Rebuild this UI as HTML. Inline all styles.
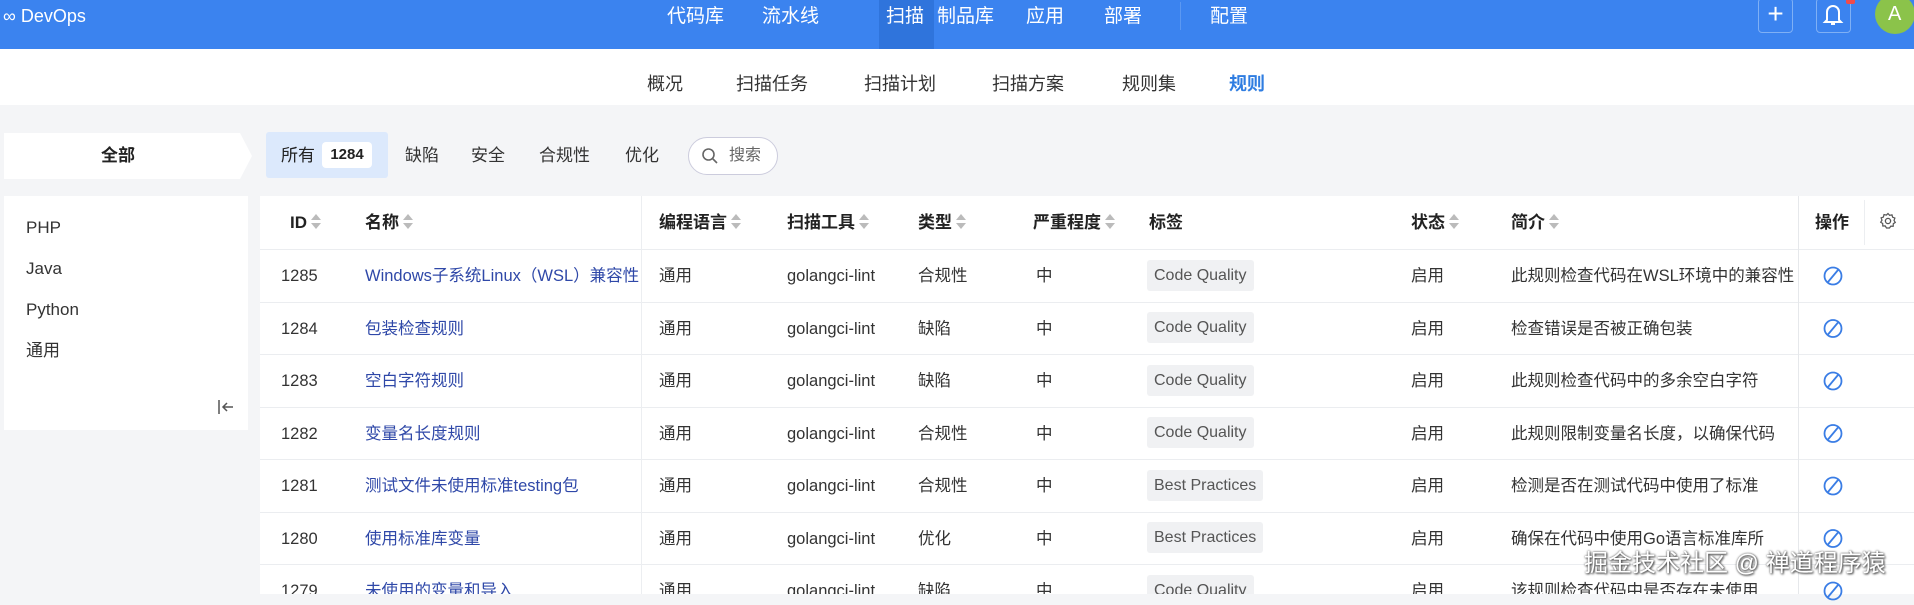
<!DOCTYPE html>
<html><head><meta charset="utf-8"><style>
*{margin:0;padding:0;box-sizing:border-box}
body{width:1914px;height:594px;overflow:hidden;background:#f4f5f7;font-family:"Liberation Sans","Noto Sans CJK SC",sans-serif;color:#333;position:relative}
.a{position:absolute;white-space:nowrap;line-height:22px}
.top{position:absolute;left:0;top:0;width:1914px;height:49px;background:#3b83ef}
.nav{color:#fff;font-size:19px;top:6px}
.sub{font-size:18px;top:73px;color:#333}
.th{font-size:17px;font-weight:bold;color:#222;top:212px}
.sort{display:inline-block;vertical-align:middle;margin-left:4px;width:10px;height:16px;position:relative;top:-2px}
.sort:before{content:"";position:absolute;left:0;top:0;border:5px solid transparent;border-bottom:6px solid #bbb;border-top:0}
.sort:after{content:"";position:absolute;left:0;top:9px;border:5px solid transparent;border-top:6px solid #bbb;border-bottom:0}
.td{font-size:16.5px;color:#333}
.nm{color:#2f48a8}
.tag{position:absolute;background:#f0f1f3;border-radius:3px;height:31px;line-height:31px;padding:0 7px;font-size:16px;color:#555}
.row{position:absolute;left:260px;width:1654px;height:1px;background:#ebedf0}
</style></head><body>
<div class="top"></div>
<div class="a" style="left:879px;top:0;width:55px;height:49px;background:#2f74dc"></div>
<div class="a" style="left:3px;top:5px;color:#fff;font-size:18px">∞ DevOps</div>
<div class="a nav" style="left:667px">代码库</div>
<div class="a nav" style="left:762px">流水线</div>
<div class="a nav" style="left:886px">扫描</div>
<div class="a nav" style="left:937px">制品库</div>
<div class="a nav" style="left:1026px">应用</div>
<div class="a nav" style="left:1104px">部署</div>
<div class="a" style="left:1180px;top:2px;width:1px;height:28px;background:#5b98f2"></div>
<div class="a nav" style="left:1210px">配置</div>
<div class="a" style="left:1758px;top:-2px;width:35px;height:35px;border:1px solid #7fb0f5;border-radius:4px;color:#fff;font-size:28px;line-height:30px;text-align:center">+</div>
<div class="a" style="left:1816px;top:-2px;width:35px;height:35px;border:1px solid #7fb0f5;border-radius:4px"></div>
<svg class="a" style="left:1822px;top:2px" width="22" height="26" viewBox="0 0 22 26"><path d="M5 18V10a6 6 0 0 1 12 0v8l2 2H3z M9 22h4" fill="none" stroke="#fff" stroke-width="2"/></svg>
<div class="a" style="left:1846px;top:-4px;width:9px;height:8px;background:#f04b4b;border-radius:2px"></div>
<div class="a" style="left:1875px;top:-6px;width:40px;height:40px;border-radius:50%;background:#8bc34a;color:#fff;font-size:20px;line-height:40px;padding-left:13px">A</div>

<div class="a" style="left:0;top:49px;width:1914px;height:56px;background:#fff"></div>
<div class="a sub" style="left:647px">概况</div>
<div class="a sub" style="left:736px">扫描任务</div>
<div class="a sub" style="left:864px">扫描计划</div>
<div class="a sub" style="left:992px">扫描方案</div>
<div class="a sub" style="left:1122px">规则集</div>
<div class="a sub" style="left:1229px;color:#2f7de1;font-weight:bold">规则</div>

<svg class="a" style="left:4px;top:133px" width="248" height="46"><path d="M0 0H236L248 23L236 46H0z" fill="#fff"/></svg>
<div class="a" style="left:101px;top:145px;font-size:17px;font-weight:bold;color:#222">全部</div>
<div class="a" style="left:266px;top:132px;width:122px;height:46px;background:#dce9fc;border-radius:3px"></div>
<div class="a" style="left:281px;top:145px;font-size:17px;color:#222">所有</div>
<div class="a" style="left:322px;top:142px;width:50px;height:26px;background:#fff;border-radius:4px;font-size:15px;font-weight:bold;line-height:26px;text-align:center;color:#222">1284</div>
<div class="a" style="left:405px;top:145px;font-size:17px">缺陷</div>
<div class="a" style="left:471px;top:145px;font-size:17px">安全</div>
<div class="a" style="left:539px;top:145px;font-size:17px">合规性</div>
<div class="a" style="left:625px;top:145px;font-size:17px">优化</div>
<div class="a" style="left:688px;top:137px;width:90px;height:38px;border:1px solid #ccd;border-radius:19px;background:#fff"></div>
<svg class="a" style="left:701px;top:147px" width="18" height="18"><circle cx="7.5" cy="7.5" r="5.5" fill="none" stroke="#666" stroke-width="1.6"/><path d="M11.5 11.5L16 16" stroke="#666" stroke-width="1.6"/></svg>
<div class="a" style="left:729px;top:145px;font-size:16px;color:#666">搜索</div>

<div class="a" style="left:4px;top:196px;width:244px;height:234px;background:#fff"></div>
<div class="a" style="left:26px;top:217px;font-size:17px">PHP</div>
<div class="a" style="left:26px;top:258px;font-size:17px">Java</div>
<div class="a" style="left:26px;top:299px;font-size:17px">Python</div>
<div class="a" style="left:26px;top:340px;font-size:17px">通用</div>
<svg class="a" style="left:217px;top:399px" width="18" height="16"><path d="M2 1v14M16 8H6M10 4L6 8l4 4" fill="none" stroke="#555" stroke-width="1.5"/></svg>

<div class="a" style="left:260px;top:196px;width:1654px;height:398px;background:#fff"></div>
<div class="row" style="top:249px"></div>
<div class="row" style="top:302px"></div>
<div class="row" style="top:354px"></div>
<div class="row" style="top:407px"></div>
<div class="row" style="top:459px"></div>
<div class="row" style="top:512px"></div>
<div class="row" style="top:564px"></div>
<div class="a" style="left:641px;top:196px;width:1px;height:398px;background:#eceef1"></div>
<div class="a" style="left:1798px;top:196px;width:1px;height:398px;background:#e6e8eb"></div>
<div class="a" style="left:1864px;top:200px;width:1px;height:45px;background:#eceef1"></div>

<div class="a th" style="left:290px">ID<i class="sort"></i></div>
<div class="a th" style="left:365px">名称<i class="sort"></i></div>
<div class="a th" style="left:659px">编程语言<i class="sort"></i></div>
<div class="a th" style="left:787px">扫描工具<i class="sort"></i></div>
<div class="a th" style="left:918px">类型<i class="sort"></i></div>
<div class="a th" style="left:1033px">严重程度<i class="sort"></i></div>
<div class="a th" style="left:1149px">标签</div>
<div class="a th" style="left:1411px">状态<i class="sort"></i></div>
<div class="a th" style="left:1511px">简介<i class="sort"></i></div>
<div class="a th" style="left:1815px">操作</div>
<svg class="a" style="left:1879px;top:212px" width="18" height="18" viewBox="0 0 18 18"><circle cx="9" cy="9" r="2.6" fill="none" stroke="#555" stroke-width="1.3"/><path d="M9 1.5l1.6 1.8 2.4-.5.6 2.4 2.3.9-.9 2.3 1.3 2-2 1.3-.1 2.5-2.4-.1L10.5 16H7.5l-1.3-2.1-2.4.1-.1-2.5-2-1.3 1.3-2-.9-2.3 2.3-.9.6-2.4 2.4.5z" fill="none" stroke="#555" stroke-width="1.2"/></svg>

<div style="position:absolute;left:0;top:0;width:1798px;height:594px;overflow:hidden">
<div class="a td" style="left:281px;top:265px">1285</div><div class="a td nm" style="left:365px;top:265px;width:275px;overflow:hidden">Windows子系统Linux（WSL）兼容性</div><div class="a td" style="left:659px;top:265px">通用</div><div class="a td" style="left:787px;top:265px">golangci-lint</div><div class="a td" style="left:918px;top:265px">合规性</div><div class="a td" style="left:1036px;top:265px">中</div><div class="tag" style="left:1147px;top:260px">Code Quality</div><div class="a td" style="left:1411px;top:265px">启用</div><div class="a td" style="left:1511px;top:265px">此规则检查代码在WSL环境中的兼容性</div>

<div class="a td" style="left:281px;top:318px">1284</div><div class="a td nm" style="left:365px;top:318px">包装检查规则</div><div class="a td" style="left:659px;top:318px">通用</div><div class="a td" style="left:787px;top:318px">golangci-lint</div><div class="a td" style="left:918px;top:318px">缺陷</div><div class="a td" style="left:1036px;top:318px">中</div><div class="tag" style="left:1147px;top:312px">Code Quality</div><div class="a td" style="left:1411px;top:318px">启用</div><div class="a td" style="left:1511px;top:318px">检查错误是否被正确包装</div>

<div class="a td" style="left:281px;top:370px">1283</div><div class="a td nm" style="left:365px;top:370px">空白字符规则</div><div class="a td" style="left:659px;top:370px">通用</div><div class="a td" style="left:787px;top:370px">golangci-lint</div><div class="a td" style="left:918px;top:370px">缺陷</div><div class="a td" style="left:1036px;top:370px">中</div><div class="tag" style="left:1147px;top:365px">Code Quality</div><div class="a td" style="left:1411px;top:370px">启用</div><div class="a td" style="left:1511px;top:370px">此规则检查代码中的多余空白字符</div>

<div class="a td" style="left:281px;top:423px">1282</div><div class="a td nm" style="left:365px;top:423px">变量名长度规则</div><div class="a td" style="left:659px;top:423px">通用</div><div class="a td" style="left:787px;top:423px">golangci-lint</div><div class="a td" style="left:918px;top:423px">合规性</div><div class="a td" style="left:1036px;top:423px">中</div><div class="tag" style="left:1147px;top:417px">Code Quality</div><div class="a td" style="left:1411px;top:423px">启用</div><div class="a td" style="left:1511px;top:423px">此规则限制变量名长度，以确保代码</div>

<div class="a td" style="left:281px;top:475px">1281</div><div class="a td nm" style="left:365px;top:475px">测试文件未使用标准testing包</div><div class="a td" style="left:659px;top:475px">通用</div><div class="a td" style="left:787px;top:475px">golangci-lint</div><div class="a td" style="left:918px;top:475px">合规性</div><div class="a td" style="left:1036px;top:475px">中</div><div class="tag" style="left:1147px;top:470px">Best Practices</div><div class="a td" style="left:1411px;top:475px">启用</div><div class="a td" style="left:1511px;top:475px">检测是否在测试代码中使用了标准</div>

<div class="a td" style="left:281px;top:528px">1280</div><div class="a td nm" style="left:365px;top:528px">使用标准库变量</div><div class="a td" style="left:659px;top:528px">通用</div><div class="a td" style="left:787px;top:528px">golangci-lint</div><div class="a td" style="left:918px;top:528px">优化</div><div class="a td" style="left:1036px;top:528px">中</div><div class="tag" style="left:1147px;top:522px">Best Practices</div><div class="a td" style="left:1411px;top:528px">启用</div><div class="a td" style="left:1511px;top:528px">确保在代码中使用Go语言标准库所</div>

<div class="a td" style="left:281px;top:580px">1279</div><div class="a td nm" style="left:365px;top:580px">未使用的变量和导入</div><div class="a td" style="left:659px;top:580px">通用</div><div class="a td" style="left:787px;top:580px">golangci-lint</div><div class="a td" style="left:918px;top:580px">缺陷</div><div class="a td" style="left:1036px;top:580px">中</div><div class="tag" style="left:1147px;top:575px">Code Quality</div><div class="a td" style="left:1411px;top:580px">启用</div><div class="a td" style="left:1511px;top:580px">该规则检查代码中是否存在未使用</div>
</div>

<svg class="a" style="left:1822px;top:265px" width="22" height="340"><g fill="none" stroke="#3a7de5" stroke-width="1.8">
<circle cx="11" cy="11" r="8.5"/><path d="M16 5L6 17"/>
<circle cx="11" cy="63.5" r="8.5"/><path d="M16 57.5L6 69.5"/>
<circle cx="11" cy="116" r="8.5"/><path d="M16 110L6 122"/>
<circle cx="11" cy="168.5" r="8.5"/><path d="M16 162.5L6 174.5"/>
<circle cx="11" cy="221" r="8.5"/><path d="M16 215L6 227"/>
<circle cx="11" cy="273.5" r="8.5"/><path d="M16 267.5L6 279.5"/>
<circle cx="11" cy="326" r="8.5"/><path d="M16 320L6 332"/>
</g></svg>

<div class="a" style="left:1584px;top:550px;font-size:24px;line-height:28px;color:#fff;text-shadow:0 0 2px #555,1px 1px 2px #333">掘金技术社区 @ 禅道程序猿</div>
</body></html>
